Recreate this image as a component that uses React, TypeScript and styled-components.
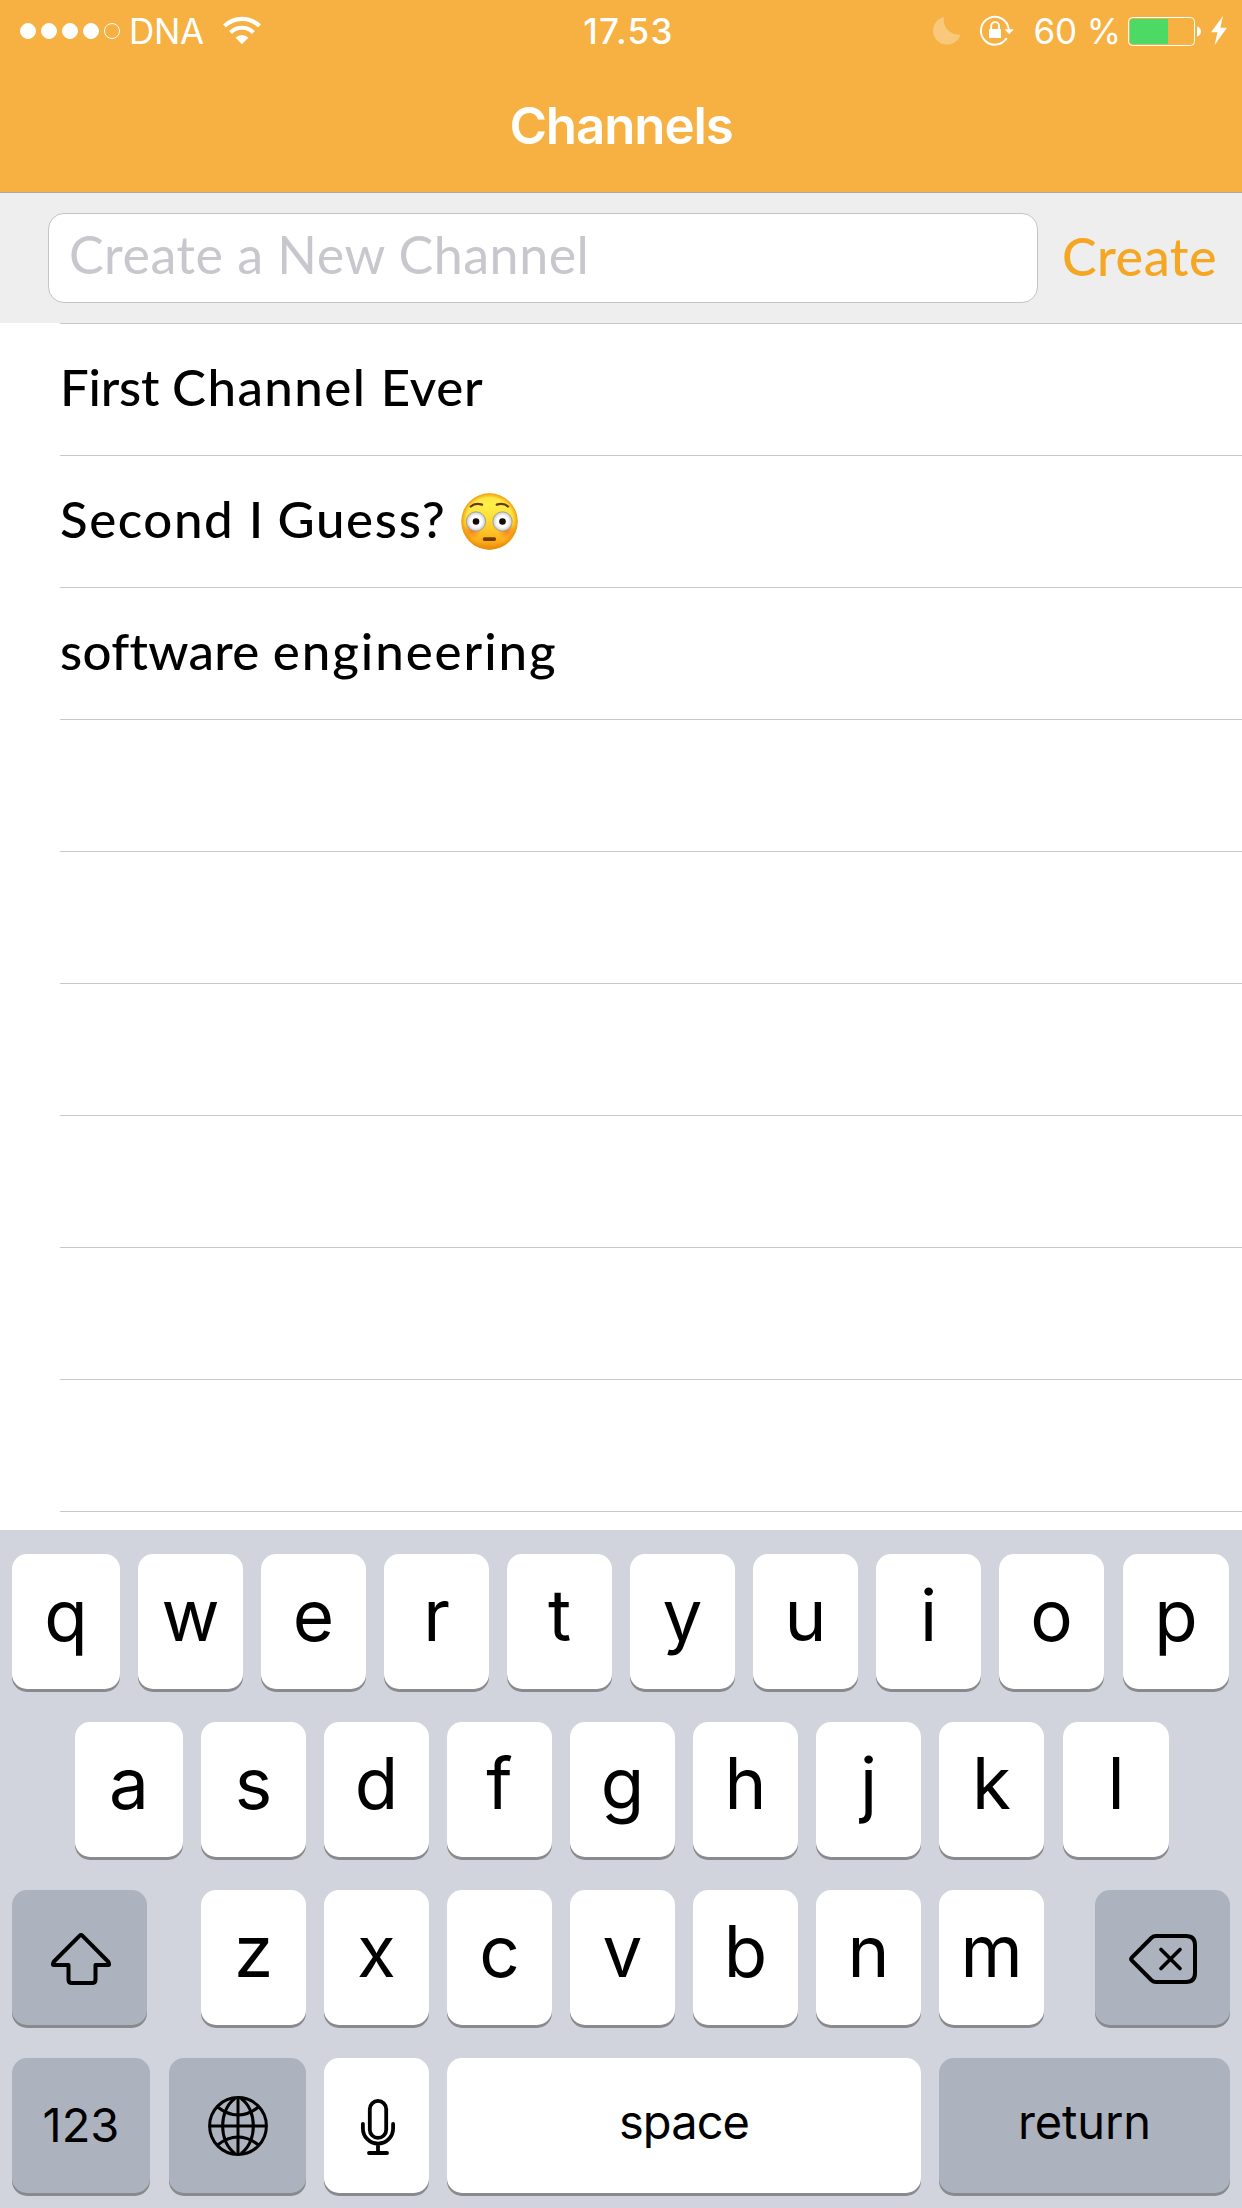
import React from "react";
import styled, { createGlobalStyle } from "styled-components";

const GlobalStyle = createGlobalStyle`
  * { box-sizing: border-box; }
  body { margin: 0; background: #fff; }
`;

const system = `Inter, "Liberation Sans", sans-serif`;
const rounded = `Lato, "Open Sans", sans-serif`;

const Screen = styled.main`
  width: 1242px;
  height: 2208px;
  display: flex;
  flex-direction: column;
  overflow: hidden;
  background: #fff;
  font-family: ${system};
`;

const Header = styled.header`
  flex: none;
  height: 193px;
  background: #f6b142;
  border-bottom: 1px solid #a9a9ab;
  color: #fff;
`;

const StatusBar = styled.div`
  height: 60px;
  display: grid;
  grid-template-columns: 1fr auto 1fr;
  align-items: center;
  padding: 0 15px 0 20px;
`;

const StatusGroup = styled.div<{ $end?: boolean }>`
  display: flex;
  align-items: center;
  justify-content: ${(p) => (p.$end ? "flex-end" : "flex-start")};
`;

const Dots = styled.div`
  display: flex;
  gap: 5px;
`;

const Dot = styled.i<{ $empty?: boolean }>`
  width: 16px;
  height: 16px;
  border-radius: 50%;
  border: 1px solid #fff;
  background: ${(p) => (p.$empty ? "transparent" : "#fff")};
`;

const StatusText = styled.span<{ $weight: number; $spacing: number; $left?: number; $right?: number }>`
  font-size: 35px;
  line-height: 60px;
  padding-top: 1px;
  font-weight: ${(p) => p.$weight};
  letter-spacing: ${(p) => p.$spacing}px;
  margin-left: ${(p) => p.$left ?? 0}px;
  margin-right: ${(p) => p.$right ?? 0}px;
  white-space: pre;
`;

const Title = styled.h1`
  margin: 0;
  height: 132px;
  padding-bottom: 1px;
  display: flex;
  align-items: center;
  justify-content: center;
  font-size: 51px;
  font-weight: 600;
  letter-spacing: -1.1px;
`;

const Composer = styled.div`
  flex: none;
  height: 130px;
  padding: 20px 25px 0 48px;
  display: flex;
  align-items: flex-start;
  justify-content: space-between;
  background: #eeeeee;
  font-family: ${rounded};
`;

const Field = styled.div`
  width: 990px;
  height: 90px;
  padding: 0 20px 8px;
  display: flex;
  align-items: center;
  background: #fff;
  border: 1px solid #c4c4c6;
  border-radius: 16px;
  color: #c7c7cd;
  font-size: 52px;
  letter-spacing: 0.5px;
`;

const CreateButton = styled.button`
  height: 90px;
  border: 0;
  padding: 0 0 5px;
  background: none;
  font: 500 52px ${rounded};
  letter-spacing: 0.5px;
  color: #f5a623;
`;

const List = styled.ul`
  flex: 1;
  margin: 0;
  padding: 0 0 0 60px;
  list-style: none;
  overflow: hidden;
  font-family: ${rounded};
`;

const Row = styled.li`
  height: 132px;
  padding-bottom: 6px;
  display: flex;
  align-items: center;
  border-top: 1px solid #c8c7cc;
`;

const RowText = styled.span`
  font-size: 51px;
  font-weight: 500;
  white-space: pre;
`;

const Word = styled.span<{ $spacing: number }>`
  letter-spacing: ${(p) => p.$spacing}px;
`;

const Keyboard = styled.section`
  flex: none;
  height: 678px;
  padding: 24px 12px 15px;
  display: flex;
  flex-direction: column;
  gap: 33px;
  background: #d1d4dc;
`;

const KeyRow = styled.div<{ $inset?: boolean; $split?: boolean }>`
  display: flex;
  gap: 18px;
  padding-left: ${(p) => (p.$inset ? 63 : 0)}px;
  justify-content: ${(p) => (p.$split ? "space-between" : "flex-start")};
`;

const KeyGroup = styled.div`
  display: flex;
  gap: 18px;
  margin-left: 3px;
`;

const Key = styled.button<{ $w: number; $dark?: boolean; $label?: "word" | "digits"; $spacing?: number; $nudge?: boolean }>`
  flex: none;
  width: ${(p) => p.$w}px;
  height: 135px;
  margin-left: ${(p) => (p.$nudge ? 1 : 0)}px;
  border: 0;
  padding: 0 0 ${(p) => (p.$label === "word" ? 9 : p.$label === "digits" ? 3 : 14)}px;
  display: flex;
  align-items: center;
  justify-content: center;
  border-radius: 15px;
  background: ${(p) => (p.$dark ? "#acb3be" : "#fff")};
  box-shadow: 0 3px 0 #888a8d;
  color: #000;
  font-family: ${system};
  font-size: ${(p) => (p.$label ? 47 : 71)}px;
  font-weight: ${(p) => (p.$label ? 400 : 370)};
  letter-spacing: ${(p) => p.$spacing ?? 0}px;
`;

const IconKey = styled(Key)`
  padding: 3px 0 0;
`;

const Svg = styled.svg<{ $left?: number; $top?: number }>`
  display: block;
  flex: none;
  overflow: visible;
  margin-left: ${(p) => p.$left ?? 0}px;
  margin-top: ${(p) => p.$top ?? 0}px;
`;

const Wifi = () => (
  <Svg $left={19} width="38" height="28" viewBox="0 0 38 28" fill="none" stroke="#fff">
    <path d="M1.5 9 A25 25 0 0 1 36.5 9" strokeWidth="4.2" />
    <path d="M7.6 15.4 A16.3 16.3 0 0 1 30.4 15.4" strokeWidth="4.2" />
    <path d="M12.6 20.7 A9.2 9.2 0 0 1 25.4 20.7 L19 27.2Z" fill="#fff" stroke="none" />
  </Svg>
);

const Moon = () => (
  <Svg width="28" height="28" viewBox="0 0 28 28">
    <path d="M11 0 A14 14 0 1 0 27.5 17.5 A14.7 14.7 0 0 1 11 0Z" fill="#fff" opacity=".3" />
  </Svg>
);

const RotationLock = () => (
  <Svg $left={19} width="34" height="31" viewBox="0 0 34 31" fill="none" stroke="#fff">
    <path d="M28.7 14.8 A13.9 13.9 0 1 0 26.7 23" strokeWidth="2" />
    <path d="M24.6 14.2 H33.8 L29.2 19.2Z" fill="#fff" stroke="none" />
    <path d="M11.2 14.5 V11 A3.9 3.9 0 0 1 19 11 V14.5" strokeWidth="1.9" />
    <rect x="9" y="14" width="12" height="9" rx=".6" fill="#fff" stroke="none" />
  </Svg>
);

const Battery = () => (
  <Svg $top={1} width="73" height="29" viewBox="0 0 73 29">
    <rect x=".5" y=".5" width="66" height="28" rx="4" fill="none" stroke="#fff" />
    <path d="M4.500 2 H40 V27 H4.500 Q2 27 2 24.500 V4.500 Q2 2 4.500 2Z" fill="#4cd964" />
    <path d="M69 9.500 C74.300 10.500 74.300 18.500 69 19.500Z" fill="#fff" />
  </Svg>
);

const Bolt = () => (
  <Svg $left={10} width="16" height="29" viewBox="0 0 16 29">
    <path d="M12 0 L0 16.300 H6.500 L3.600 29 L16 11.700 H9.300Z" fill="#fff" />
  </Svg>
);

const Flushed = () => (
  <Svg $left={14} $top={5} width="57" height="57" viewBox="0 0 57 57" role="img" aria-label="😳">
    <defs>
      <linearGradient id="face" x1="0" y1="0" x2="0" y2="1">
        <stop offset="0" stopColor="#ffe23a" />
        <stop offset=".2" stopColor="#fff04a" />
        <stop offset=".5" stopColor="#ffd931" />
        <stop offset=".85" stopColor="#fbac1c" />
        <stop offset="1" stopColor="#e88a08" />
      </linearGradient>
      <radialGradient id="rim">
        <stop offset=".84" stopColor="#e88d0a" stopOpacity="0" />
        <stop offset="1" stopColor="#e88d0a" stopOpacity=".8" />
      </radialGradient>
      <radialGradient id="blush">
        <stop offset="0" stopColor="#f56b1c" stopOpacity=".75" />
        <stop offset="1" stopColor="#f56b1c" stopOpacity="0" />
      </radialGradient>
      <radialGradient id="eye">
        <stop offset=".6" stopColor="#fff" />
        <stop offset="1" stopColor="#c4c6ca" />
      </radialGradient>
    </defs>
    <circle cx="28.500" cy="28.500" r="28.200" fill="url(#face)" />
    <circle cx="28.500" cy="28.500" r="28.200" fill="url(#rim)" />
    <circle cx="11" cy="37.500" r="9" fill="url(#blush)" />
    <circle cx="46" cy="37.500" r="9" fill="url(#blush)" />
    <circle cx="15" cy="28.500" r="9.700" fill="url(#eye)" stroke="#a39c88" strokeWidth=".9" />
    <circle cx="41.500" cy="28.500" r="9.700" fill="url(#eye)" stroke="#a39c88" strokeWidth=".9" />
    <circle cx="15" cy="28.500" r="3.300" fill="#140b06" />
    <circle cx="41.500" cy="28.500" r="3.300" fill="#140b06" />
    <path d="M9.800 13.500 Q14 9.500 21 11.600 M47 13.500 Q42.800 9.500 35.800 11.600" fill="none" stroke="#6b3606" strokeWidth="2.400" strokeLinecap="round" />
    <rect x="21.800" y="44.300" width="13.200" height="3.600" rx="1.600" fill="#703a05" />
  </Svg>
);

const ShiftIcon = () => (
  <Svg $left={3} width="60" height="52" viewBox="0 0 60 52" fill="none" stroke="#000" strokeWidth="4" strokeLinejoin="round">
    <path d="M28.700 2.700 Q30 1.300 31.300 2.700 L57 28.500 Q59.500 32 56.500 32 H44.500 V46.500 Q44.500 50 41 50 H21 Q17.500 50 17.500 46.500 V32 H3.500 Q.500 32 3 28.500Z" />
  </Svg>
);

const DeleteIcon = () => (
  <Svg width="68" height="50" viewBox="0 0 68 50" fill="none" stroke="#000" strokeWidth="4" strokeLinecap="round">
    <path d="M27 2 H57 Q66 2 66 11 V39 Q66 48 57 48 H27 Q24.500 48 22.500 46.200 L2.800 26.500 Q1.500 25 2.800 23.500 L22.500 3.800 Q24.500 2 27 2Z" />
    <path d="M32 15.500 L51 34.500 M51 15.500 L32 34.500" strokeWidth="3.700" />
  </Svg>
);

const GlobeIcon = () => (
  <Svg $top={-2} width="60" height="60" viewBox="0 0 60 60" fill="none" stroke="#000" strokeWidth="3">
    <circle cx="30" cy="30" r="28.400" />
    <path d="M30 1 V59 M1 30 H59" />
    <path d="M27 2.500 C10.500 14 10.500 46 27 57.500 M33 2.500 C49.500 14 49.500 46 33 57.500" />
    <path d="M9.500 11 Q30 27 50.500 11 M9.500 49 Q30 33 50.500 49" />
  </Svg>
);

const MicIcon = () => (
  <Svg $left={2} width="34" height="56" viewBox="0 0 34 56" fill="none" stroke="#000" strokeWidth="3.800" strokeLinecap="round">
    <rect x="8.800" y="1.900" width="16.400" height="37" rx="8.200" />
    <path d="M1.900 25 V29.500 A15.100 15.100 0 0 0 32.100 29.500 V25 M17 45 V54 M8 54 H26" />
  </Svg>
);

type ChannelName = [word: string, spacing: number][];

const channels: { name: ChannelName; flushed?: boolean }[] = [
  { name: [["First ", -0.2], ["Channel ", 1.45], ["Ever", 0.7]] },
  { name: [["Second ", 1.6], ["I ", 0.6], ["Guess?", 1.7]], flushed: true },
  { name: [["software ", 0.3], ["engineering", 1.95]] },
];

const letters = (chars: string, first: number, last: number) =>
  chars.split("").map((c, i) => {
    const isLast = i === chars.length - 1;
    return (
      <Key key={c} $w={i === 0 ? first : isLast ? last : 105} $nudge={isLast && last > 105}>
        {c}
      </Key>
    );
  });

export default function App() {
  return (
    <Screen>
      <GlobalStyle />
      <Header>
        <StatusBar>
          <StatusGroup>
            <Dots>
              <Dot /><Dot /><Dot /><Dot /><Dot $empty />
            </Dots>
            <StatusText $weight={400} $spacing={-0.3} $left={9}>DNA</StatusText>
            <Wifi />
          </StatusGroup>
          <StatusText $weight={550} $spacing={1.3} $left={10}>17.53</StatusText>
          <StatusGroup $end>
            <Moon />
            <RotationLock />
            <StatusText $weight={400} $spacing={-0.1} $left={19} $right={7}>60 %</StatusText>
            <Battery />
            <Bolt />
          </StatusGroup>
        </StatusBar>
        <Title>Channels</Title>
      </Header>
      <Composer>
        <Field>Create a New Channel</Field>
        <CreateButton>Create</CreateButton>
      </Composer>
      <List>
        {channels.map(({ name, flushed }, i) => (
          <Row key={i}>
            <RowText>
              {name.map(([word, spacing]) => (
                <Word key={word} $spacing={spacing}>{word}</Word>
              ))}
            </RowText>
            {flushed && <Flushed />}
          </Row>
        ))}
        {Array.from({ length: 7 }, (_, i) => <Row key={`empty-${i}`} />)}
      </List>
      <Keyboard>
        <KeyRow>{letters("qwertyuiop", 108, 106)}</KeyRow>
        <KeyRow $inset>{letters("asdfghjkl", 108, 106)}</KeyRow>
        <KeyRow $split>
          <IconKey $w={135} $dark aria-label="shift"><ShiftIcon /></IconKey>
          <KeyGroup>{letters("zxcvbnm", 105, 105)}</KeyGroup>
          <IconKey $w={135} $dark aria-label="delete"><DeleteIcon /></IconKey>
        </KeyRow>
        <KeyRow>
          <Key $w={138} $dark $label="digits" $spacing={0}>123</Key>
          <IconKey $w={137} $dark $nudge aria-label="next keyboard"><GlobeIcon /></IconKey>
          <IconKey $w={105} aria-label="dictate"><MicIcon /></IconKey>
          <Key $w={474} $label="word" $spacing={-0.9}>space</Key>
          <Key $w={291} $dark $label="word" $spacing={-0.1}>return</Key>
        </KeyRow>
      </Keyboard>
    </Screen>
  );
}
